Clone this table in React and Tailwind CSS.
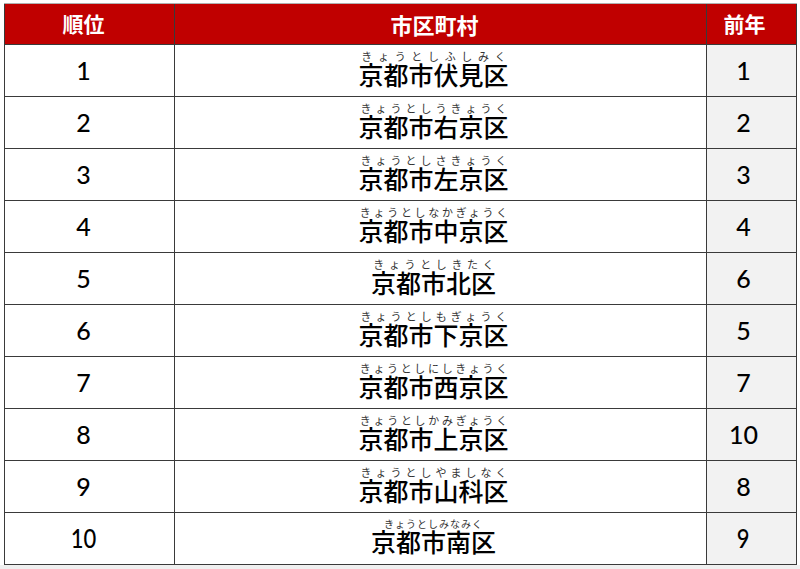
import React from "react";

const rows = [
  ["1", "京都市伏見区", "きょうとしふしみく", "1"],
  ["2", "京都市右京区", "きょうとしうきょうく", "2"],
  ["3", "京都市左京区", "きょうとしさきょうく", "3"],
  ["4", "京都市中京区", "きょうとしなかぎょうく", "4"],
  ["5", "京都市北区", "きょうとしきたく", "6"],
  ["6", "京都市下京区", "きょうとしもぎょうく", "5"],
  ["7", "京都市西京区", "きょうとしにしきょうく", "7"],
  ["8", "京都市上京区", "きょうとしかみぎょうく", "10"],
  ["9", "京都市山科区", "きょうとしやましなく", "8"],
  ["10", "京都市南区", "きょうとしみなみく", "9"],
];

const jp = { fontFamily: '"Noto Sans CJK JP", "Noto Sans", sans-serif' };
const num = { fontFamily: 'Lato, "Open Sans", sans-serif' };

export default function App() {
  return (
    <div className="w-[800px] h-[569px] bg-white flex flex-col">
      <div className="ml-[4px] mt-[3px] w-[793px] border-t border-[#b0b0b0]">
        <div className="grid grid-cols-[170px_532px_91px] h-[41px] bg-[#c00000] border-b border-[#3a3a3a] text-white font-bold text-[21px]" style={jp}>
          <div className="flex items-center justify-center border-l border-[#3a3a3a] pr-[12px]">順位</div>
          <div className="flex items-center justify-center border-l border-[#3a3a3a] text-[22px] pr-[12px]">市区町村</div>
          <div className="flex items-center justify-center border-l border-r border-[#3a3a3a] pr-[14px]">前年</div>
        </div>
        {rows.map(([rank, name, kana, prev], i) => {
          const last = i === rows.length - 1;
          return (
            <div key={rank} className="grid grid-cols-[170px_532px_91px] h-[52px] border-b border-[#3a3a3a] text-black">
              <div className="flex items-center justify-center border-l border-[#3a3a3a] text-[25px] font-medium pr-[12px]" style={num}>
                <span className={last ? "scale-x-[0.88] scale-y-[1.05] inline-block" : ""}>{rank}</span>
              </div>
              <div className="flex items-center justify-center border-l border-[#3a3a3a] pb-[3px] pr-[14px]">
                <ruby className="text-[25px] font-medium leading-[28px]" style={{ ...jp, rubyAlign: last ? "center" : "space-around" }}>
                  {name}
                  <rt className={"font-normal leading-[12px] text-[#333] " + (last ? "text-[10px] tracking-[1px]" : "text-[11px]")} style={jp}>
                    {kana}
                  </rt>
                </ruby>
              </div>
              <div className="flex items-center justify-center border-l border-r border-[#3a3a3a] bg-[#f2f2f2] text-[25px] font-medium pr-[16px]" style={num}>
                <span className={last ? "scale-x-[0.88] scale-y-[1.05] inline-block" : ""}>{prev}</span>
              </div>
            </div>
          );
        })}
      </div>
      <div className="flex-1 bg-[#f0f0f0]"></div>
    </div>
  );
}
